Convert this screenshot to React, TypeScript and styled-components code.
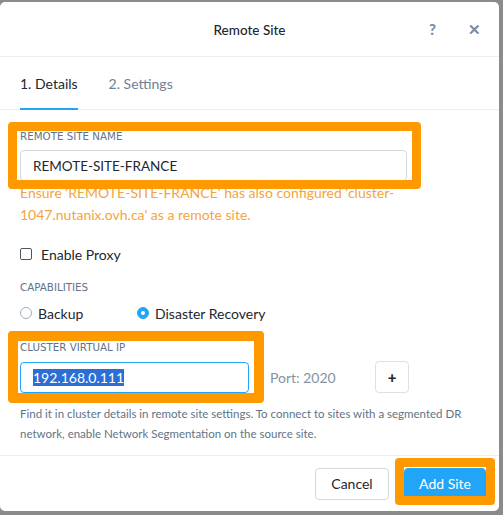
import React from "react";
import styled, { createGlobalStyle } from "styled-components";

const Global = createGlobalStyle`
  html, body { margin: 0; padding: 0; background: #898b8d; }
  body { font-family: Lato, "Open Sans", sans-serif; -webkit-font-smoothing: antialiased; }
  * { box-sizing: border-box; }
`;

const Dialog = styled.div`
  margin-top: 2px;
  width: 499px;
  height: 509px;
  background: #fff;
  border-radius: 5px;
  display: flex;
  flex-direction: column;
  overflow: hidden;
  color: #22272e;
`;

const Header = styled.div`
  height: 55px;
  border-bottom: 1px solid #eceef0;
  display: flex;
  align-items: center;
  position: relative;
  justify-content: center;
`;

const Title = styled.div`
  font-size: 13.5px;
  font-weight: 500;
  color: #22272e;
  margin-top: 1px;
`;

const HeaderIcons = styled.div`
  position: absolute;
  right: 18px;
  top: 0;
  height: 100%;
  display: flex;
  align-items: center;
  gap: 32px;
`;

const IconBtn = styled.span`
  font-size: 15px;
  font-weight: 900;
  color: #7d8c9c;
  line-height: 1;
`;

const Tabs = styled.div`
  height: 53px;
  border-bottom: 1px solid #eceef0;
  display: flex;
  padding-left: 20px;
  gap: 31px;
`;

const Tab = styled.div<{ $active?: boolean }>`
  display: flex;
  align-items: center;
  font-size: 14px;
  color: ${(p) => (p.$active ? "#22272e" : "#6f8091")};
  border-bottom: 2px solid ${(p) => (p.$active ? "#22a5f7" : "transparent")};
  padding-top: 2px;
  margin-bottom: -1px;
`;

const Body = styled.div`
  flex: 1;
  padding: 20px 20px 0 20px;
  display: flex;
  flex-direction: column;
`;

const Group = styled.div`
  position: relative;
  display: flex;
  flex-direction: column;
`;

const Label = styled.div<{ $mt?: number }>`
  font-family: "DejaVu Sans", sans-serif;
  font-size: 10.3px;
  line-height: 12px;
  color: #627386;
  text-transform: uppercase;
  margin-top: ${(p) => p.$mt ?? 0}px;
`;

const Input = styled.div<{ $focus?: boolean; $w: number }>`
  margin-top: 8px;
  width: ${(p) => p.$w}px;
  height: 31px;
  border: 1px solid ${(p) => (p.$focus ? "#22a5f7" : "#d4d9de")};
  border-radius: 4px;
  padding-left: 12px;
  display: flex;
  align-items: center;
  font-size: 13.5px;
  color: #22272e;
`;

const Selected = styled.span`
  background: #2b6fd4;
  color: #fff;
  line-height: 17px;
  font-size: 14px;
`;

const Warning = styled.div`
  margin-top: 1px;
  font-size: 14px;
  line-height: 22px;
  color: #f3a53c;
  width: 380px;
`;

const CheckRow = styled.label`
  margin-top: 18px;
  height: 20px;
  display: flex;
  align-items: center;
  gap: 9px;
  font-size: 14px;
`;

const Checkbox = styled.span`
  width: 12px;
  height: 12px;
  border: 1.5px solid #4b5662;
  border-radius: 2px;
`;

const RadioRow = styled.div`
  margin-top: 10px;
  height: 20px;
  display: flex;
  align-items: center;
`;

const RadioItem = styled.label<{ $w?: number }>`
  display: flex;
  align-items: center;
  gap: 6px;
  width: ${(p) => (p.$w ? `${p.$w}px` : "auto")};
  font-size: 14px;
`;

const Radio = styled.span<{ $checked?: boolean }>`
  width: 12px;
  height: 12px;
  border-radius: 50%;
  background: ${(p) => (p.$checked ? "#22a5f7" : "#fff")};
  border: 1px solid ${(p) => (p.$checked ? "#22a5f7" : "#a3adb8")};
  display: flex;
  align-items: center;
  justify-content: center;
  &::after {
    content: "";
    display: ${(p) => (p.$checked ? "block" : "none")};
    width: 4px;
    height: 4px;
    border-radius: 50%;
    background: #fff;
  }
`;

const IpRow = styled.div`
  display: flex;
  align-items: center;
`;

const Port = styled.div`
  margin-left: 21px;
  margin-top: 8px;
  font-size: 14px;
  color: #8593a1;
  width: 105px;
`;

const PlusBtn = styled.div`
  margin-top: 8px;
  width: 34px;
  height: 32px;
  border: 1px solid #dde1e5;
  border-radius: 4px;
  display: flex;
  align-items: center;
  justify-content: center;
  font-size: 15px;
  font-weight: 900;
  color: #22272e;
`;

const Help = styled.div`
  margin-top: 11px;
  font-size: 11.5px;
  line-height: 20px;
  color: #627386;
`;

const Footer = styled.div`
  height: 56px;
  border-top: 1px solid #eceef0;
  display: flex;
  align-items: center;
  justify-content: flex-end;
  gap: 15px;
  padding-right: 13px;
`;

const Button = styled.div<{ $primary?: boolean }>`
  position: relative;
  flex-shrink: 0;
  white-space: nowrap;
  height: 32px;
  display: flex;
  align-items: center;
  justify-content: center;
  border-radius: 4px;
  font-size: 14px;
  background: ${(p) => (p.$primary ? "#22a5f7" : "#fff")};
  color: ${(p) => (p.$primary ? "#fff" : "#22272e")};
  border: 1px solid ${(p) => (p.$primary ? "#22a5f7" : "#d4d9de")};
  width: ${(p) => (p.$primary ? 82 : 74)}px;
`;

const Annotation = styled.div<{ $t: number; $l: number; $w: number; $h: number; $b?: number }>`
  position: absolute;
  top: ${(p) => p.$t}px;
  left: ${(p) => p.$l}px;
  width: ${(p) => p.$w}px;
  height: ${(p) => p.$h}px;
  border: ${(p) => p.$b ?? 9}px solid #ff9900;
  border-radius: 4px;
  pointer-events: none;
`;

export default function App() {
  return (
    <>
      <Global />
      <Dialog>
        <Header>
          <Title>Remote Site</Title>
          <HeaderIcons>
            <IconBtn>?</IconBtn>
            <IconBtn>✕</IconBtn>
          </HeaderIcons>
        </Header>
        <Tabs>
          <Tab $active>1. Details</Tab>
          <Tab>2. Settings</Tab>
        </Tabs>
        <Body>
          <Group>
            <Label>Remote Site Name</Label>
            <Input $w={387}>REMOTE-SITE-FRANCE</Input>
            <Annotation $t={-8} $l={-12} $w={413} $h={67} />
          </Group>
          <Warning>
            Ensure 'REMOTE-SITE-FRANCE' has also configured 'cluster-1047.nutanix.ovh.ca' as a remote site.
          </Warning>
          <CheckRow>
            <Checkbox />
            Enable Proxy
          </CheckRow>
          <Label $mt={17}>Capabilities</Label>
          <RadioRow>
            <RadioItem $w={117}>
              <Radio />
              Backup
            </RadioItem>
            <RadioItem>
              <Radio $checked />
              Disaster Recovery
            </RadioItem>
          </RadioRow>
          <Group>
            <Label $mt={18}>Cluster Virtual IP</Label>
            <IpRow>
              <Input $focus $w={229}>
                <Selected>192.168.0.111</Selected>
              </Input>
              <Port>Port: 2020</Port>
              <PlusBtn>+</PlusBtn>
            </IpRow>
            <Annotation $t={8} $l={-12} $w={256} $h={72} $b={10} />
          </Group>
          <Help>
            Find it in cluster details in remote site settings. To connect to sites with a segmented DR network, enable Network Segmentation on the source site.
          </Help>
        </Body>
        <Footer>
          <Button>Cancel</Button>
          <Button $primary>
            Add Site
            <Annotation $t={-11} $l={-10} $w={100} $h={47} />
          </Button>
        </Footer>
      </Dialog>
    </>
  );
}
